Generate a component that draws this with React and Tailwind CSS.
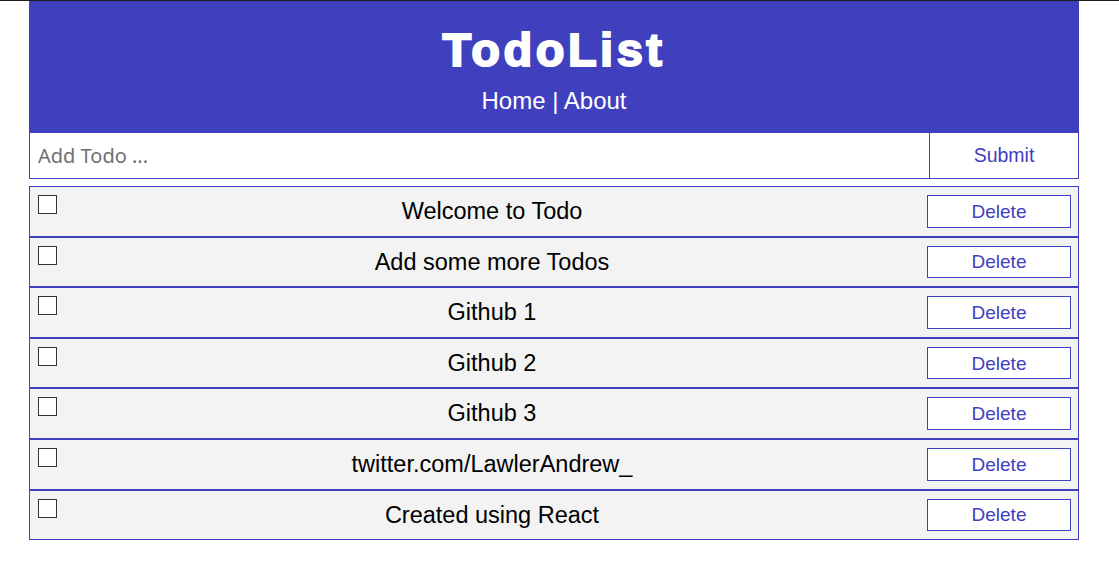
const todos = [
  'Welcome to Todo',
  'Add some more Todos',
  'Github 1',
  'Github 2',
  'Github 3',
  'twitter.com/LawlerAndrew_',
  'Created using React',
];

function TodoItem({ title }) {
  return (
    <div className="flex items-center gap-3 h-[50.6px] pl-2 pr-[7px] bg-[#f3f3f3] border border-[#4040bf]">
      <span className="self-start mt-2 w-[19px] h-[19px] shrink-0 bg-white border border-[#333]" />
      <div className="flex-1 text-center text-[23.5px] text-black leading-none pt-px">{title}</div>
      <button className="w-[144px] h-[32.5px] shrink-0 bg-white border border-[#4040bf] text-[#4040bf] text-[19px] leading-none">
        Delete
      </button>
    </div>
  );
}

export default function App() {
  return (
    <div className="min-h-[573px] bg-white font-['Liberation_Sans',Arial,sans-serif]">
      <div className="h-px bg-[#1c1c1c]" />
      <div className="ml-[29px] w-[1050px]">
        <header className="h-[132px] pt-[26px] bg-[#4040bf] text-white text-center">
          <h1 className="text-[47px] leading-[46px] font-bold tracking-[3.5px] [-webkit-text-stroke:2px_white]">TodoList</h1>
          <nav className="mt-[16px] text-[24px] leading-[24px]">
            <span>Home</span> | <span>About</span>
          </nav>
        </header>
        <form className="flex h-[46px]" onSubmit={(e) => e.preventDefault()}>
          <input
            type="text"
            placeholder="Add Todo ..."
            className="flex-1 min-w-0 pl-2 pt-px border-l border-b border-[#4040bf] outline-none font-['Noto_Sans',sans-serif] text-[20px] placeholder:text-[#6f6f6f]"
          />
          <button className="w-[150px] pt-px bg-white border-l border-r border-b border-[#4040bf] text-[#4040bf] text-[19.5px]">
            Submit
          </button>
        </form>
        <div className="mt-[7px]">
          {todos.map((t) => (
            <TodoItem key={t} title={t} />
          ))}
        </div>
      </div>
    </div>
  );
}
